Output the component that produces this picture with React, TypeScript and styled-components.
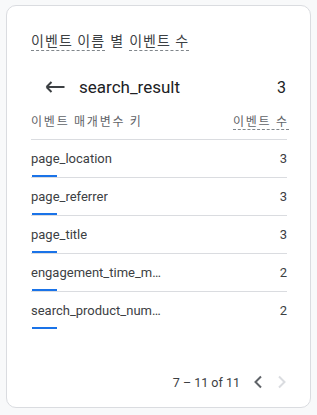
import React from "react";
import styled, { createGlobalStyle } from "styled-components";

const Global = createGlobalStyle`
  html, body { margin: 0; padding: 0; background: #f8f9fa; }
  body { font-family: Roboto, "Noto Sans CJK KR", sans-serif; }
  * { box-sizing: border-box; }
`;

const Page = styled.div`
  width: 317px;
  height: 415px;
  padding: 5px 6px 7px 6px;
`;

const Card = styled.div`
  height: 403px;
  background: #fff;
  border: 1px solid #dadce0;
  border-radius: 10px;
  padding: 25px 23px 0 24px;
  display: flex;
  flex-direction: column;
`;

const Title = styled.div`
  display: flex;
  gap: 5px;
  height: 26px;
  align-items: flex-start;
  font-family: "Noto Sans CJK KR", sans-serif;
  font-size: 14px;
  letter-spacing: 1.1px;
  color: #3c4043;
  line-height: 18px;
`;

const Dashed = styled.span`
  border-bottom: 1px dashed #80868b;
  padding-bottom: 1px;
`;

const BackRow = styled.div`
  display: flex;
  align-items: center;
  height: 42px;
  margin-top: 9px;
  padding-right: 1px;
`;

const BackIcon = styled.svg`
  width: 20px;
  height: 12px;
  margin-left: 14px;
  margin-right: 14px;
  flex: none;
`;

const EventName = styled.div`
  flex: 1;
  font-family: Roboto, sans-serif;
  font-size: 17px;
  color: #202124;
`;

const EventCount = styled.div`
  font-family: Roboto, sans-serif;
  font-size: 16px;
  color: #202124;
`;

const HeaderRow = styled.div`
  display: flex;
  justify-content: space-between;
  align-items: flex-start;
  height: 32px;
  padding-top: 5px;
  border-bottom: 1px solid #dadce0;
  font-family: "Noto Sans CJK KR", sans-serif;
  font-size: 12px;
  letter-spacing: 1.8px;
  color: #5f6368;
  line-height: 16px;
`;

const HeaderDashed = styled.span`
  border-bottom: 1px dashed #80868b;
  margin-right: -1.8px;
`;

const Row = styled.div<{ $last?: boolean }>`
  height: 38px;
  display: flex;
  flex-direction: column;
  border-bottom: ${(p) => (p.$last ? "none" : "1px solid #dadce0")};
`;

const RowLine = styled.div`
  display: flex;
  justify-content: space-between;
  align-items: center;
  height: 35px;
  padding-top: 1px;
  font-family: Roboto, sans-serif;
  font-size: 13px;
  color: #3c4043;
`;

const RowLabel = styled.span`
  max-width: 132px;
  overflow: hidden;
  white-space: nowrap;
  text-overflow: ellipsis;
`;

const Bar = styled.div`
  width: 25px;
  height: 2px;
  background: #1a73e8;
  margin-left: 1px;
`;

const Spacer = styled.div`
  flex: 1;
`;

const Pager = styled.div`
  display: flex;
  align-items: center;
  justify-content: flex-end;
  height: 24px;
  margin-bottom: 13px;
  font-family: Roboto, sans-serif;
  font-size: 12.5px;
  color: #3c4043;
`;

const PagerText = styled.span`
  margin-right: 13px;
`;

const Chevron = styled.svg`
  width: 10px;
  height: 14px;
  margin-right: 14px;
  &:last-child { margin-right: 0; }
`;

const rows = [
  { label: "page_location", value: 3 },
  { label: "page_referrer", value: 3 },
  { label: "page_title", value: 3 },
  { label: "engagement_time_msec", value: 2 },
  { label: "search_product_number", value: 2 },
];

export default function App() {
  return (
    <>
      <Global />
      <Page>
        <Card>
          <Title>
            <Dashed>이벤트 이름</Dashed>
            <span>별</span>
            <Dashed>이벤트 수</Dashed>
          </Title>
          <BackRow>
            <BackIcon viewBox="0 0 20 12">
              <path d="M1.5 6H19.5M1.5 6L6.5 1M1.5 6L6.5 11" stroke="#3c4043" strokeWidth="2" fill="none" />
            </BackIcon>
            <EventName>search_result</EventName>
            <EventCount>3</EventCount>
          </BackRow>
          <HeaderRow>
            <span>이벤트 매개변수 키</span>
            <HeaderDashed>이벤트 수</HeaderDashed>
          </HeaderRow>
          {rows.map((r, i) => (
            <Row key={r.label} $last={i === rows.length - 1}>
              <RowLine>
                <RowLabel>{r.label}</RowLabel>
                <span>{r.value}</span>
              </RowLine>
              <Bar />
            </Row>
          ))}
          <Spacer />
          <Pager>
            <PagerText>7 – 11 of 11</PagerText>
            <Chevron viewBox="0 0 10 14">
              <path d="M8 1.5L2.5 7L8 12.5" stroke="#5f6368" strokeWidth="2" fill="none" />
            </Chevron>
            <Chevron viewBox="0 0 10 14">
              <path d="M2 1.5L7.5 7L2 12.5" stroke="#dadce0" strokeWidth="2" fill="none" />
            </Chevron>
          </Pager>
        </Card>
      </Page>
    </>
  );
}
